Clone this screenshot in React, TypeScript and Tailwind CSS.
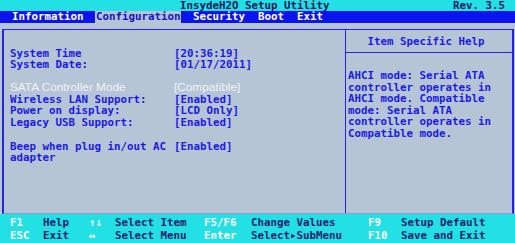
import React from "react";

const mono = { fontFamily: '"DejaVu Sans Mono", "Liberation Mono", monospace' };

export default function App() {
  return (
    <div
      className="w-[515px] h-[243px] flex flex-col bg-[#b6c5d5] overflow-hidden text-[10.8px] font-bold leading-[11.5px]"
      style={mono}
    >
      {/* title bar */}
      <div className="h-[11px] bg-[#22e0e4] flex items-center text-[#14145a] leading-[10px]">
        <span className="ml-[180px]">InsydeH2O Setup Utility</span>
        <span className="ml-auto mr-[10px]">Rev. 3.5</span>
      </div>
      {/* menu bar */}
      <div className="h-[12px] bg-[#0c14ee] flex items-center text-white leading-[12px]">
        <span className="ml-[12px] w-[83px]">Information</span>
        <span className="w-[86px] h-full bg-[#b6c5d5] text-[#1414c8] pl-[1px]">Configuration</span>
        <span className="ml-[12px] w-[65px]">Security</span>
        <span className="w-[39px]">Boot</span>
        <span>Exit</span>
      </div>
      <div className="h-[6px]" />
      {/* frame */}
      <div className="h-[185px] ml-[2px] mr-[1px] border-l-2 border-r-2 border-t border-b border-[#2424dc] border-b-[#8a9ad0] flex text-[#1a1ae4]">
        <div className="w-[342px] border-r border-[#2424dc] pt-[5px] pl-[6px]">
          <div className="h-[11.5px]" />
          <div className="flex mt-[1px]"><span className="w-[164px]">System Time</span><span>[20:36:19]</span></div>
          <div className="flex"><span className="w-[164px]">System Date:</span><span>[01/17/2011]</span></div>
          <div className="h-[11.5px]" />
          <div
            className="flex text-[#eef2f7] font-normal text-[11.8px]"
            style={{ fontFamily: '"Liberation Sans", Arial, sans-serif' }}
          >
            <span className="w-[164px]">SATA Controller Mode</span><span>[Compatible]</span>
          </div>
          <div className="flex"><span className="w-[164px]">Wireless LAN Support:</span><span>[Enabled]</span></div>
          <div className="flex"><span className="w-[164px]">Power on display:</span><span>[LCD Only]</span></div>
          <div className="flex"><span className="w-[164px]">Legacy USB Support:</span><span>[Enabled]</span></div>
          <div className="h-[11.5px]" />
          <div className="flex mt-[1px]"><span className="w-[164px]">Beep when plug in/out AC</span><span>[Enabled]</span></div>
          <div>adapter</div>
        </div>
        <div className="flex-1 flex flex-col">
          <div className="h-[23px] border-b border-[#2424dc] flex items-center justify-center pt-[1px] pr-[6px]">
            Item Specific Help
          </div>
          <div className="pl-[2px] pt-[17px]">
            <div>AHCI mode: Serial ATA</div>
            <div>controller operates in</div>
            <div>AHCI mode. Compatible</div>
            <div>mode: Serial ATA</div>
            <div>controller operates in</div>
            <div>Compatible mode.</div>
          </div>
        </div>
      </div>
      {/* footer */}
      <div className="h-[29px] bg-[#22e0e4] pl-[10px] pt-[3px] grid grid-cols-[33px_46px_26px_89px_47px_117px_33px_1fr] leading-[11.8px] text-[#1c1c6c]">
        <span className="text-white">F1</span>
        <span>Help</span>
        <span className="text-white">↑↓</span>
        <span>Select Item</span>
        <span className="text-white">F5/F6</span>
        <span>Change Values</span>
        <span className="text-white">F9</span>
        <span>Setup Default</span>
        <span className="text-white">ESC</span>
        <span>Exit</span>
        <span className="text-white">↔</span>
        <span>Select Menu</span>
        <span className="text-white">Enter</span>
        <span>Select▸SubMenu</span>
        <span className="text-white">F10</span>
        <span>Save and Exit</span>
      </div>
    </div>
  );
}
